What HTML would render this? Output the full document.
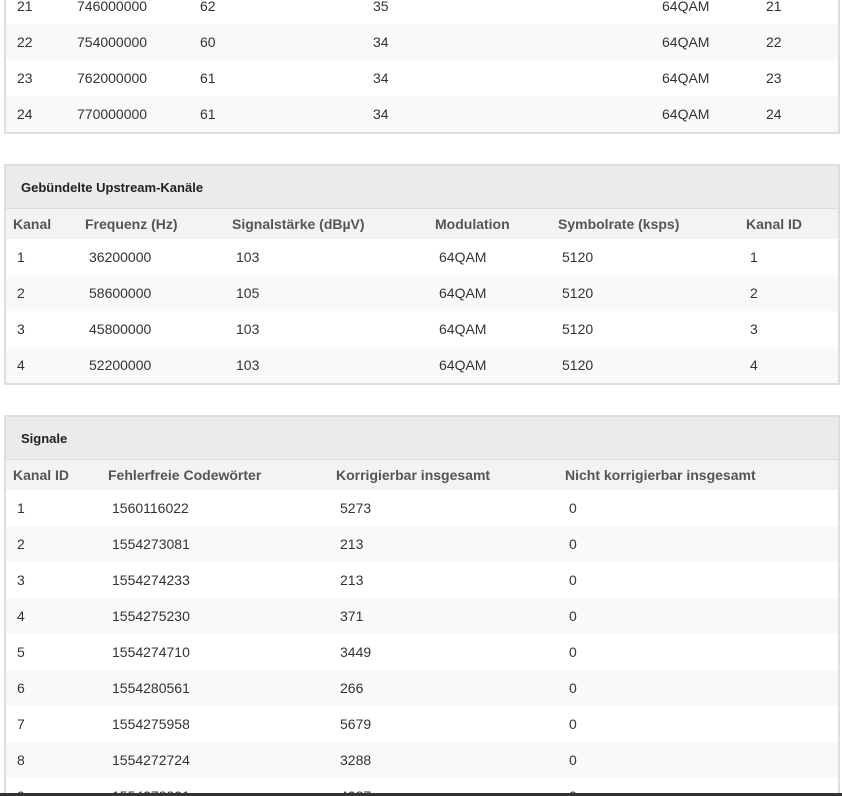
<!DOCTYPE html>
<html style="height:796px;overflow:hidden"><head><meta charset="utf-8"><style>
body{margin:0;width:842px;height:796px;overflow:hidden;background:#fff;font-family:"Liberation Sans",Arial,sans-serif;font-size:14px;color:#333;position:relative}
.p{position:absolute;left:4px;width:832px;border:2px solid #dedede;background:#fff;overflow:hidden}
.r{position:absolute;left:0;width:832px;height:36px}
.r.g{background:#f9f9f9}
.r span{position:absolute;top:10px}
.h{position:absolute;left:0;width:832px;height:42px;background:#ebebeb;border-bottom:1px solid #dcdcdc}
.h b{position:absolute;left:15px;top:14px;font-size:13px;color:#222}
.ch{position:absolute;left:0;top:43px;width:832px;height:30px;background:#f3f3f3;font-weight:bold;color:#555}
.ch span{position:absolute;top:7px}
.bar{position:absolute;left:0;top:793px;width:842px;height:3px;background:#333}
</style></head><body>

<div class="p" style="top:-14px;height:144px">
<div class="r" style="top:0px"><span style="left:11px">21</span><span style="left:71px">746000000</span><span style="left:194px">62</span><span style="left:367px">35</span><span style="left:656px">64QAM</span><span style="left:760px">21</span></div>
<div class="r g" style="top:36px"><span style="left:11px">22</span><span style="left:71px">754000000</span><span style="left:194px">60</span><span style="left:367px">34</span><span style="left:656px">64QAM</span><span style="left:760px">22</span></div>
<div class="r" style="top:72px"><span style="left:11px">23</span><span style="left:71px">762000000</span><span style="left:194px">61</span><span style="left:367px">34</span><span style="left:656px">64QAM</span><span style="left:760px">23</span></div>
<div class="r g" style="top:108px"><span style="left:11px">24</span><span style="left:71px">770000000</span><span style="left:194px">61</span><span style="left:367px">34</span><span style="left:656px">64QAM</span><span style="left:760px">24</span></div>
</div>

<div class="p" style="top:164px;height:217px">
<div class="h"><b>Gebündelte Upstream-Kanäle</b></div>
<div class="ch"><span style="left:7px">Kanal</span><span style="left:79px">Frequenz (Hz)</span><span style="left:226px">Signalstärke (dBµV)</span><span style="left:429px">Modulation</span><span style="left:552px">Symbolrate (ksps)</span><span style="left:740px">Kanal ID</span></div>
<div class="r" style="top:73px"><span style="left:11px">1</span><span style="left:83px">36200000</span><span style="left:230px">103</span><span style="left:433px">64QAM</span><span style="left:556px">5120</span><span style="left:744px">1</span></div>
<div class="r g" style="top:109px"><span style="left:11px">2</span><span style="left:83px">58600000</span><span style="left:230px">105</span><span style="left:433px">64QAM</span><span style="left:556px">5120</span><span style="left:744px">2</span></div>
<div class="r" style="top:145px"><span style="left:11px">3</span><span style="left:83px">45800000</span><span style="left:230px">103</span><span style="left:433px">64QAM</span><span style="left:556px">5120</span><span style="left:744px">3</span></div>
<div class="r g" style="top:181px"><span style="left:11px">4</span><span style="left:83px">52200000</span><span style="left:230px">103</span><span style="left:433px">64QAM</span><span style="left:556px">5120</span><span style="left:744px">4</span></div>
</div>

<div class="p" style="top:415px;height:376px">
<div class="h"><b>Signale</b></div>
<div class="ch"><span style="left:7px">Kanal ID</span><span style="left:102px">Fehlerfreie Codewörter</span><span style="left:330px">Korrigierbar insgesamt</span><span style="left:559px">Nicht korrigierbar insgesamt</span></div>
<div class="r" style="top:73px"><span style="left:11px">1</span><span style="left:106px">1560116022</span><span style="left:334px">5273</span><span style="left:563px">0</span></div>
<div class="r g" style="top:109px"><span style="left:11px">2</span><span style="left:106px">1554273081</span><span style="left:334px">213</span><span style="left:563px">0</span></div>
<div class="r" style="top:145px"><span style="left:11px">3</span><span style="left:106px">1554274233</span><span style="left:334px">213</span><span style="left:563px">0</span></div>
<div class="r g" style="top:181px"><span style="left:11px">4</span><span style="left:106px">1554275230</span><span style="left:334px">371</span><span style="left:563px">0</span></div>
<div class="r" style="top:217px"><span style="left:11px">5</span><span style="left:106px">1554274710</span><span style="left:334px">3449</span><span style="left:563px">0</span></div>
<div class="r g" style="top:253px"><span style="left:11px">6</span><span style="left:106px">1554280561</span><span style="left:334px">266</span><span style="left:563px">0</span></div>
<div class="r" style="top:289px"><span style="left:11px">7</span><span style="left:106px">1554275958</span><span style="left:334px">5679</span><span style="left:563px">0</span></div>
<div class="r g" style="top:325px"><span style="left:11px">8</span><span style="left:106px">1554272724</span><span style="left:334px">3288</span><span style="left:563px">0</span></div>
<div class="r" style="top:361px"><span style="left:11px">9</span><span style="left:106px">1554278891</span><span style="left:334px">4087</span><span style="left:563px">0</span></div>
</div>

<div class="bar"></div>
</body></html>
